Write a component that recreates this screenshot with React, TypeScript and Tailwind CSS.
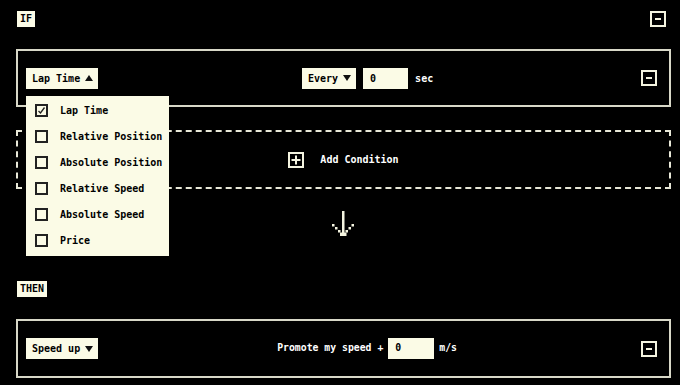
import React from 'react';

const cream = 'bg-[#fbfbe6]';

function MinusButton() {
  return (
    <button className="w-4 h-4 border-2 border-[#f4f4e0] flex items-center justify-center">
      <span className="block w-[6px] h-[2px] bg-[#f4f4e0]" />
    </button>
  );
}

function Tag({ children }: { children: React.ReactNode }) {
  return (
    <div className={`${cream} text-black text-[10px] font-bold leading-none px-[3px] py-[3px]`}>
      {children}
    </div>
  );
}

function Caret({ up }: { up?: boolean }) {
  return (
    <svg width="8" height="6" viewBox="0 0 8 6">
      <path d={up ? 'M0 6 L4 0 L8 6 Z' : 'M0 0 L8 0 L4 6 Z'} fill="#111" />
    </svg>
  );
}

function Select({ label, up }: { label: string; up?: boolean }) {
  return (
    <div className={`${cream} text-black text-[10px] font-bold h-[21px] flex items-center gap-[5px] pl-[6px] pr-[5px]`}>
      <span>{label}</span>
      <Caret up={up} />
    </div>
  );
}

const options = ['Lap Time', 'Relative Position', 'Absolute Position', 'Relative Speed', 'Absolute Speed', 'Price'];

function Menu() {
  return (
    <div className={`absolute left-0 top-[28px] w-[143px] ${cream} text-black pt-[2px] pb-[2px] z-10`}>
      {options.map((o, i) => (
        <div key={o} className="h-[26px] flex items-center pl-[9px] gap-[12px] text-[10px] font-bold">
          <span className="w-[13px] h-[13px] border-2 border-[#222] flex items-center justify-center">
            {i === 0 && (
              <svg width="9" height="9" viewBox="0 0 9 9">
                <path d="M1.5 5 L3.5 7 L7.5 1.5" stroke="#222" strokeWidth="1.3" fill="none" />
              </svg>
            )}
          </span>
          <span>{o}</span>
        </div>
      ))}
    </div>
  );
}

export default function App() {
  return (
    <div
      className="w-[680px] h-[385px] bg-black text-[#f4f4e0] overflow-hidden"
      style={{ fontFamily: '"DejaVu Sans Mono", monospace' }}
    >
      <div className="flex items-center justify-between pl-[17px] pr-[14px] pt-[11px]">
        <Tag>IF</Tag>
        <MinusButton />
      </div>

      <div className="ml-4 mr-[9px] mt-[22px] h-[58px] border-2 border-[#d8d8c8] flex items-center justify-between pl-[8px] pr-[12px]">
        <div className="relative">
          <Select label="Lap Time" up />
          <Menu />
        </div>
        <div className="flex items-center gap-[7px] text-[10px] font-bold mr-[4px]">
          <Select label="Every" />
          <div className={`${cream} text-black w-[45px] h-[21px] flex items-center pl-[7px]`}>0</div>
          <span className="text-white">sec</span>
        </div>
        <MinusButton />
      </div>

      <div className="ml-4 mr-[9px] mt-[23px] h-[59px] border-2 border-dashed border-[#e8e8d8] flex items-center justify-center gap-[16px]">
        <span className="w-4 h-4 border-2 border-[#f4f4e0] flex items-center justify-center">
          <svg width="10" height="10" viewBox="0 0 10 10">
            <path d="M5 0.5 V9.5 M0.5 5 H9.5" stroke="#f4f4e0" strokeWidth="2" />
          </svg>
        </span>
        <span className="text-[10px] font-bold text-white">Add Condition</span>
      </div>

      <div className="flex justify-center mt-[22px] pl-[6px]">
        <svg width="24" height="26" viewBox="0 0 24 26">
          <rect x="11" y="0" width="2.5" height="25" fill="#f4f4e0" />
          <rect x="1" y="13" width="2.5" height="2.5" fill="#f4f4e0" />
          <rect x="20.5" y="13" width="2.5" height="2.5" fill="#f4f4e0" />
          <rect x="4" y="16" width="2.5" height="2.5" fill="#f4f4e0" />
          <rect x="17.5" y="16" width="2.5" height="2.5" fill="#f4f4e0" />
          <rect x="7" y="19" width="2.5" height="2.5" fill="#f4f4e0" />
          <rect x="14.5" y="19" width="2.5" height="2.5" fill="#f4f4e0" />
          <rect x="9" y="21.5" width="6.5" height="3.5" fill="#f4f4e0" />
        </svg>
      </div>

      <div className="flex pl-[17px] mt-[44px]">
        <Tag>THEN</Tag>
      </div>

      <div className="ml-4 mr-[9px] mt-[22px] h-[59px] border-2 border-[#d8d8c8] flex items-center justify-between pl-[8px] pr-[12px]">
        <Select label="Speed up" />
        <div className="flex items-center gap-[5px] text-[9.8px] font-bold mr-[5px]">
          <span className="text-white">Promote my speed +</span>
          <div className={`${cream} text-black w-[46px] h-[21px] flex items-center pl-[7px]`}>0</div>
          <span className="text-white">m/s</span>
        </div>
        <MinusButton />
      </div>
    </div>
  );
}
